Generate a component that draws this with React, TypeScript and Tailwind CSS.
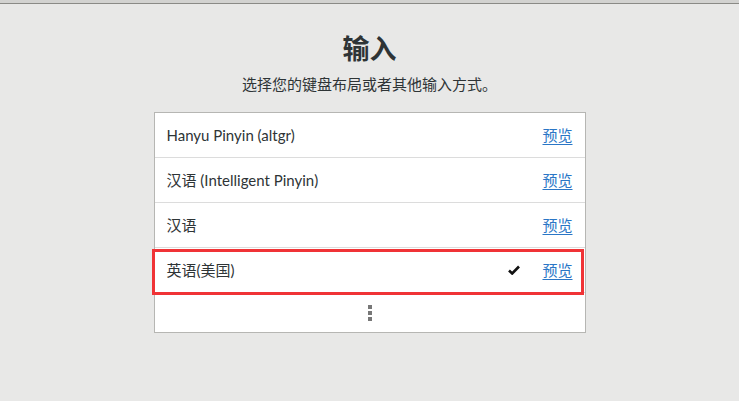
import React from "react";

interface Layout {
  name: string;
  selected?: boolean;
}

const layouts: Layout[] = [
  { name: "Hanyu Pinyin (altgr)" },
  { name: "汉语 (Intelligent Pinyin)" },
  { name: "汉语" },
  { name: "英语(美国)", selected: true },
];

const font = "font-['Lato','Noto_Sans_CJK_SC',sans-serif]";

const Row: React.FC<{ item: Layout }> = ({ item }) => (
  <div className="relative flex h-[45px] items-center border-b border-[#dcdcdc] pl-[12px] pr-[12px] text-[15px] text-[#2e3436]">
    <span className="flex-1">{item.name}</span>
    {item.selected && (
      <svg width="12" height="10" viewBox="0 0 12 10" className="mr-[22px]">
        <path d="M1 5.5 L4.2 8.5 L11 1.5" fill="none" stroke="#111" strokeWidth="2.6" strokeLinejoin="miter" />
      </svg>
    )}
    <a href="#" className="text-[#2a76c6] underline underline-offset-[3px]">
      预览
    </a>
    {item.selected && (
      <div className="pointer-events-none absolute left-[-3px] right-[1px] top-[1px] bottom-[-3px] border-[3px] border-[#f03336]" />
    )}
  </div>
);

export default function App() {
  return (
    <div className={`h-[401px] w-[739px] overflow-hidden bg-[#e8e8e7] ${font}`}>
      <div className="h-[3px] bg-[#d2d2d0]" />
      <div className="h-px bg-[#8a8a86]" />
      <div className="flex flex-col items-center">
        <h1 className="mt-[26px] text-[27px] font-bold leading-[38px] text-[#2e3436]">输入</h1>
        <p className="mt-[6px] text-[15px] leading-[20px] text-[#2e3436]">选择您的键盘布局或者其他输入方式。</p>
        <div className="mt-[18px] w-[432px] border border-[#b6b6b3] bg-white">
          {layouts.map((l) => (
            <Row key={l.name} item={l} />
          ))}
          <div className="flex h-[39px] flex-col items-center justify-center gap-[2px]">
            <span className="h-[4px] w-[4px] bg-[#777]" />
            <span className="h-[4px] w-[4px] bg-[#777]" />
            <span className="h-[4px] w-[4px] bg-[#777]" />
          </div>
        </div>
      </div>
    </div>
  );
}
